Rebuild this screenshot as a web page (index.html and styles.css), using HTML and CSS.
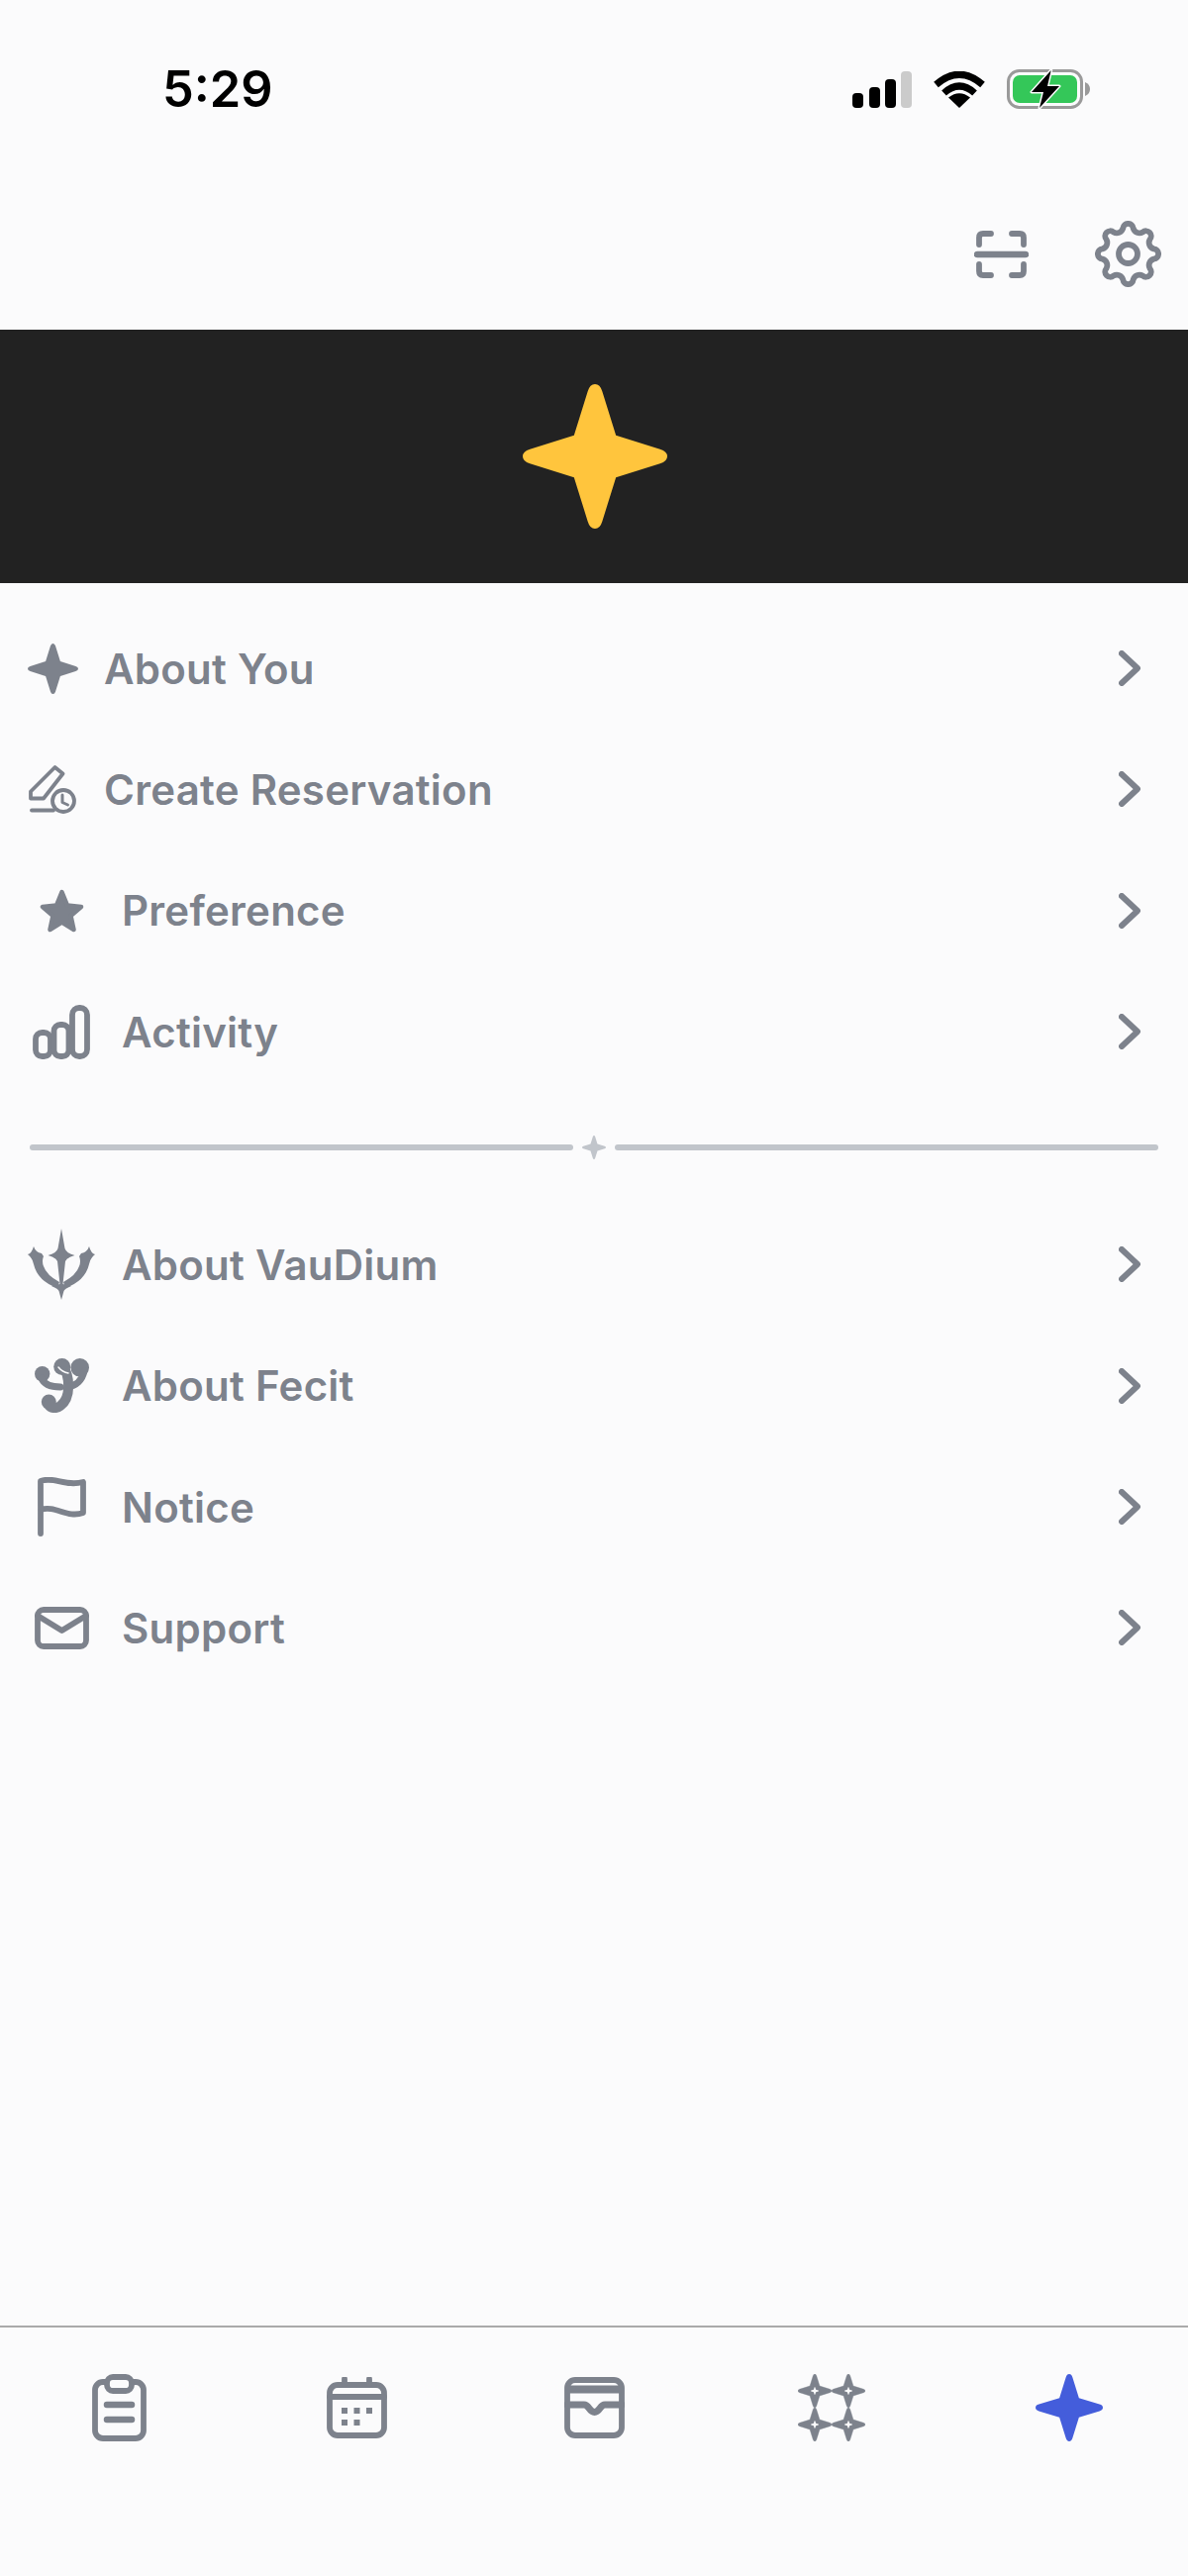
FILE: index.html
```html
<!DOCTYPE html>
<html lang="en">

<head>
  <meta charset="UTF-8">
  <meta name="viewport" content="width=device-width, initial-scale=1.0">
  <title>Profile menu</title>
  <link rel="stylesheet" href="styles.css">
</head>

<body>
  <svg class="defs" width="0" height="0">
    <symbol id="spark" viewBox="0 0 100 100">
      <path d="M45 5Q46.5 0 50 0Q53.5 0 55 5L64.5 35.5L95 45Q100 46.5 100 50Q100 53.5 95 55L64.5 64.5L55 95Q53.5 100 50 100Q46.5 100 45 95L35.5 64.5L5 55Q0 53.5 0 50Q0 46.5 5 45L35.5 35.5Z" />
    </symbol>
    <symbol id="chevron" viewBox="0 0 22 36">
      <path d="M3 3L19 18L3 33" />
    </symbol>
  </svg>

  <div class="app">
    <header class="status">
      <span class="time">5:29</span>
      <div class="status-icons">
        <svg class="signal" width="60" height="37" viewBox="0 0 60 37">
          <rect x="0" y="22" width="11" height="15" rx="4" />
          <rect x="17" y="16" width="11" height="21" rx="4" />
          <rect x="33" y="8" width="11" height="29" rx="4" />
          <rect class="signal-off" x="49" y="0" width="11" height="37" rx="4" />
        </svg>
        <svg class="wifi" width="52" height="37" viewBox="0 0 52 37">
          <path d="M2.5 13.5Q26 -7 49.5 13.5" />
          <path d="M10.5 22Q26 8 41.5 22" />
          <path class="wifi-dot" d="M26 37L15 26.5Q26 18 37 26.5Z" />
        </svg>
        <svg class="battery" width="84" height="40" viewBox="0 0 84 40">
          <rect class="battery-shell" x="1.5" y="1.5" width="74" height="37" rx="11" />
          <rect class="battery-fill" x="6" y="6" width="65" height="28" rx="7" />
          <path class="battery-tip" d="M79 13Q84 15 84 20Q84 25 79 27Z" />
          <path class="battery-bolt" d="M44.7 1L25 23H37L33 39L53 17H41Z" />
        </svg>
      </div>
    </header>

    <div class="toolbar">
      <svg class="line-icon" width="55" height="48" viewBox="0 0 55 48">
        <path d="M5 14V7Q5 3 9 3H17M38 3H46Q50 3 50 7V14M5 34V41Q5 45 9 45H17M38 45H46Q50 45 50 41V34" />
        <path class="thick" d="M3 24H52" />
      </svg>
      <svg class="line-icon" width="67" height="67" viewBox="0 0 67 67">
        <path d="M28.33 7.51A5.2 5.2 0 0 1 38.67 7.51A6.5 6.5 0 0 0 48.22 11.46A5.2 5.2 0 0 1 55.54 18.78A6.5 6.5 0 0 0 59.49 28.33A5.2 5.2 0 0 1 59.49 38.67A6.5 6.5 0 0 0 55.54 48.22A5.2 5.2 0 0 1 48.22 55.54A6.5 6.5 0 0 0 38.67 59.49A5.2 5.2 0 0 1 28.33 59.49A6.5 6.5 0 0 0 18.78 55.54A5.2 5.2 0 0 1 11.46 48.22A6.5 6.5 0 0 0 7.51 38.67A5.2 5.2 0 0 1 7.51 28.33A6.5 6.5 0 0 0 11.46 18.78A5.2 5.2 0 0 1 18.78 11.46A6.5 6.5 0 0 0 28.33 7.51Z" />
        <circle cx="33.5" cy="33.5" r="9.5" />
      </svg>
    </div>

    <div class="banner">
      <svg class="banner-star" width="146" height="146"><use href="#spark" /></svg>
    </div>

    <nav class="menu">
      <a class="row" href="#">
        <span class="row-icon">
          <svg class="fill-icon" width="51" height="51"><use href="#spark" /></svg>
        </span>
        <span class="row-label">About You</span>
        <svg class="row-arrow" width="22" height="36"><use href="#chevron" /></svg>
      </a>
      <a class="row" href="#">
        <span class="row-icon">
          <svg class="line-icon thin" width="48" height="49" viewBox="0 0 48 49">
            <path d="M26.5 2L34.5 8.5L15 33.5H2V26.5Z" />
            <path d="M3 45.5H25" />
            <circle class="clip" cx="35" cy="36" r="11" />
            <path class="clock-hand" d="M34 30V37.5L39.5 40" />
          </svg>
        </span>
        <span class="row-label">Create Reservation</span>
        <svg class="row-arrow" width="22" height="36"><use href="#chevron" /></svg>
      </a>
      <a class="row" href="#">
        <span class="row-icon row-icon-wide">
          <svg class="fill-icon star-icon" width="45" height="44" viewBox="0 0 45 44">
            <path d="M22.5 3L28 16.5L42 18L31.5 27L34.5 41L22.5 33.5L10.5 41L13.5 27L3 18L17 16.5Z" />
          </svg>
        </span>
        <span class="row-label">Preference</span>
        <svg class="row-arrow" width="22" height="36"><use href="#chevron" /></svg>
      </a>
      <a class="row" href="#">
        <span class="row-icon row-icon-wide">
          <svg class="line-icon" width="58" height="55" viewBox="0 0 58 55">
            <rect x="3" y="28" width="15" height="24" rx="6.5" />
            <rect x="21.5" y="20" width="15" height="32" rx="6.5" />
            <rect x="40" y="3" width="15" height="49" rx="7" />
          </svg>
        </span>
        <span class="row-label">Activity</span>
        <svg class="row-arrow" width="22" height="36"><use href="#chevron" /></svg>
      </a>

      <div class="divider">
        <span class="divider-line"></span>
        <svg class="divider-star" width="24" height="24"><use href="#spark" /></svg>
        <span class="divider-line"></span>
      </div>

      <a class="row" href="#">
        <span class="row-icon row-icon-wide">
          <svg class="fill-icon" width="70" height="72" viewBox="0 0 70 72">
            <path d="M35 0L38.5 20Q40 25 48.5 27Q41 29 39 33L36.5 56L45 58Q38 61 37.5 63L35 72L32.5 63Q32 61 25 58L33.5 56L31 33Q29 29 21.5 27Q30 25 31.5 20Z" />
            <path d="M1 26Q5 25 7 18Q9 24 15 25L17 28Q15 33 17 38Q20 47 33 54L31 60Q11 53 7 36Q6 30 1 26Z" />
            <path d="M69 26Q65 25 63 18Q61 24 55 25L53 28Q55 33 53 38Q50 47 37 54L39 60Q59 53 63 36Q64 30 69 26Z" />
          </svg>
        </span>
        <span class="row-label">About VauDium</span>
        <svg class="row-arrow" width="22" height="36"><use href="#chevron" /></svg>
      </a>
      <a class="row" href="#">
        <span class="row-icon row-icon-wide">
          <svg class="ornament" width="55" height="55" viewBox="0 0 55 55">
            <circle cx="7.7" cy="15.7" r="7.7" />
            <circle cx="45.7" cy="9.3" r="9.3" />
            <circle cx="27.7" cy="8.5" r="8.5" />
            <circle cx="14.3" cy="44" r="7.5" />
            <path d="M28 7C36 18 37 40 26 48C22 51 17 51 14 47" />
            <path class="ornament-arm" d="M7 20C10 28 18 29 26 29" />
            <path class="ornament-arm" d="M33 29C42 28 48 22 50 13" />
            <path class="ornament-cut" d="M24 9Q28 14 34 15" />
          </svg>
        </span>
        <span class="row-label">About Fecit</span>
        <svg class="row-arrow" width="22" height="36"><use href="#chevron" /></svg>
      </a>
      <a class="row" href="#">
        <span class="row-icon row-icon-wide">
          <svg class="line-icon" width="49" height="60" viewBox="0 0 49 60">
            <path d="M3 57V4C17 -1 28 10 46 5V36C30 42 18 28 3 33" />
          </svg>
        </span>
        <span class="row-label">Notice</span>
        <svg class="row-arrow" width="22" height="36"><use href="#chevron" /></svg>
      </a>
      <a class="row" href="#">
        <span class="row-icon row-icon-wide">
          <svg class="line-icon" width="55" height="43" viewBox="0 0 55 43">
            <rect x="3" y="3" width="49" height="37" rx="6" />
            <path d="M3 9L27.5 24L52 9" />
          </svg>
        </span>
        <span class="row-label">Support</span>
        <svg class="row-arrow" width="22" height="36"><use href="#chevron" /></svg>
      </a>
    </nav>

    <footer class="tabbar">
      <a class="tab" href="#">
        <svg class="line-icon" width="55" height="68" viewBox="0 0 55 68">
          <rect x="3" y="8" width="49" height="57" rx="8" />
          <rect class="clip" x="15" y="3" width="25" height="14" rx="6" />
          <path class="thick" d="M15 31H40M15 46H40" />
        </svg>
      </a>
      <a class="tab" href="#">
        <svg class="line-icon" width="61" height="62" viewBox="0 0 61 62">
          <rect x="3" y="8" width="55" height="51" rx="8" />
          <path d="M3 20H58M18 2V7M43 2V7" />
          <rect class="cal-dot" x="15" y="31" width="6" height="6" />
          <rect class="cal-dot" x="27.5" y="31" width="6" height="6" />
          <rect class="cal-dot" x="40" y="31" width="6" height="6" />
          <rect class="cal-dot" x="15" y="43" width="6" height="6" />
          <rect class="cal-dot" x="27.5" y="43" width="6" height="6" />
        </svg>
      </a>
      <a class="tab" href="#">
        <svg class="line-icon" width="61" height="62" viewBox="0 0 61 62">
          <rect x="3" y="3" width="55" height="56" rx="8" />
          <path class="wallet-bar" d="M3 12.5H58" />
          <path class="wallet-notch" d="M3 28H20C25 28 25 35.5 30.5 35.5C36 35.5 36 28 41 28H58" />
        </svg>
      </a>
      <a class="tab" href="#">
        <svg width="68" height="68" viewBox="0 0 68 68">
          <g class="tab-grid">
            <use href="#spark" x="0" y="0" width="34" height="34" />
            <use href="#spark" x="34" y="0" width="34" height="34" />
            <use href="#spark" x="0" y="34" width="34" height="34" />
            <use href="#spark" x="34" y="34" width="34" height="34" />
          </g>
          <g class="tab-grid-hole">
            <use href="#spark" x="13" y="13" width="8" height="8" />
            <use href="#spark" x="47" y="13" width="8" height="8" />
            <use href="#spark" x="13" y="47" width="8" height="8" />
            <use href="#spark" x="47" y="47" width="8" height="8" />
          </g>
        </svg>
      </a>
      <a class="tab" href="#">
        <svg class="tab-active" width="68" height="68"><use href="#spark" /></svg>
      </a>
    </footer>
  </div>
</body>

</html>
```

FILE: styles.css
```css
html {
  box-sizing: border-box;
  font-family: 'Inter', 'Liberation Sans', sans-serif;
}

*,
*:after,
*:before {
  box-sizing: inherit;
}

body {
  margin: 0;
  background-color: #fbfbfc;
}

a {
  color: inherit;
  text-decoration: none;
}

svg {
  display: block;
  flex: none;
}

.defs {
  position: absolute;
}

.app {
  display: flex;
  flex-direction: column;
  height: 2602px;
  overflow: hidden;
}

/* status bar */
.status {
  display: flex;
  align-items: center;
  justify-content: space-between;
  height: 180px;
  padding: 0 99px 0 164px;
}

.time {
  font-size: 50.5px;
  font-weight: 600;
  line-height: 1;
  color: #000;
}

.status-icons {
  display: flex;
  align-items: center;
  gap: 22px;
}

.signal {
  fill: #000;
}

.signal-off {
  fill: #cbcbcb;
}

.wifi {
  fill: none;
  stroke: #000;
  stroke-width: 7;
}

.wifi-dot {
  fill: #000;
  stroke: none;
}

.battery-shell {
  fill: none;
  stroke: #9a9a9a;
  stroke-width: 3;
}

.battery-fill {
  fill: #34c759;
}

.battery-tip {
  fill: #9a9a9a;
}

.battery-bolt {
  fill: #000;
  stroke: #fbfbfc;
  stroke-width: 3;
  stroke-linejoin: round;
  paint-order: stroke;
}

/* toolbar */
.toolbar {
  display: flex;
  align-items: center;
  justify-content: flex-end;
  gap: 67px;
  height: 153px;
  padding-right: 27px;
}

.line-icon {
  fill: none;
  stroke: #7d828c;
  stroke-width: 5.8;
  stroke-linecap: round;
  stroke-linejoin: round;
}

.line-icon.thin {
  stroke-width: 3.8;
}

.clock-hand {
  stroke-width: 3;
}

.thick {
  stroke-width: 6.5;
}

.wallet-bar {
  stroke-width: 8;
  stroke-linecap: butt;
}

.wallet-notch {
  stroke-width: 7;
}

.fill-icon {
  fill: #7d828c;
}

.star-icon {
  stroke: #7d828c;
  stroke-width: 4.5;
  stroke-linejoin: round;
}

/* banner */
.banner {
  display: flex;
  align-items: center;
  justify-content: center;
  height: 256px;
  background-color: #222;
}

.banner-star {
  margin-left: 2px;
  fill: #ffc53d;
}

/* menu */
.menu {
  flex: 1;
  padding-top: 25px;
}

.row {
  display: flex;
  align-items: center;
  gap: 26px;
  height: 122.33px;
  padding: 0 48px 0 27px;
  color: #7d828c;
}

.row-icon {
  display: flex;
  align-items: center;
  justify-content: center;
  flex: none;
  width: 52px;
}

.row-icon-wide {
  width: 70px;
}

.row-label {
  flex: 1;
  font-size: 42px;
  font-weight: 560;
  letter-spacing: .25px;
}

.row-arrow {
  fill: none;
  stroke: #7d828c;
  stroke-width: 6;
  stroke-linecap: round;
  stroke-linejoin: round;
}

.divider {
  display: flex;
  align-items: center;
  gap: 9px;
  margin: 44px 0 45px;
  padding: 0 30px;
}

.divider-line {
  flex: 1;
  height: 6px;
  border-radius: 3px;
  background-color: #c1c5cb;
}

.divider-star {
  fill: #c1c5cb;
}

.ornament {
  fill: #7d828c;
  stroke: none;
}

.ornament path {
  fill: none;
  stroke: #7d828c;
  stroke-width: 10;
  stroke-linecap: round;
}

.ornament .ornament-arm {
  stroke-width: 7;
}

.ornament .ornament-cut {
  stroke: #fbfbfc;
  stroke-width: 1.5;
}

/* tab bar */
.tabbar {
  display: flex;
  height: 253px;
  padding-top: 47px;
  border-top: 2px solid #aaa;
}

.tab {
  display: flex;
  justify-content: center;
  align-items: center;
  flex: 1;
  height: 68px;
}

.clip {
  fill: #fbfbfc;
}

.cal-dot {
  fill: #7d828c;
  stroke: none;
}

.tab-grid {
  fill: #7d828c;
  stroke: #7d828c;
  stroke-width: 1.2;
}

.tab-grid-hole {
  fill: #fbfbfc;
}

.tab-active {
  fill: #445ddb;
}
```
